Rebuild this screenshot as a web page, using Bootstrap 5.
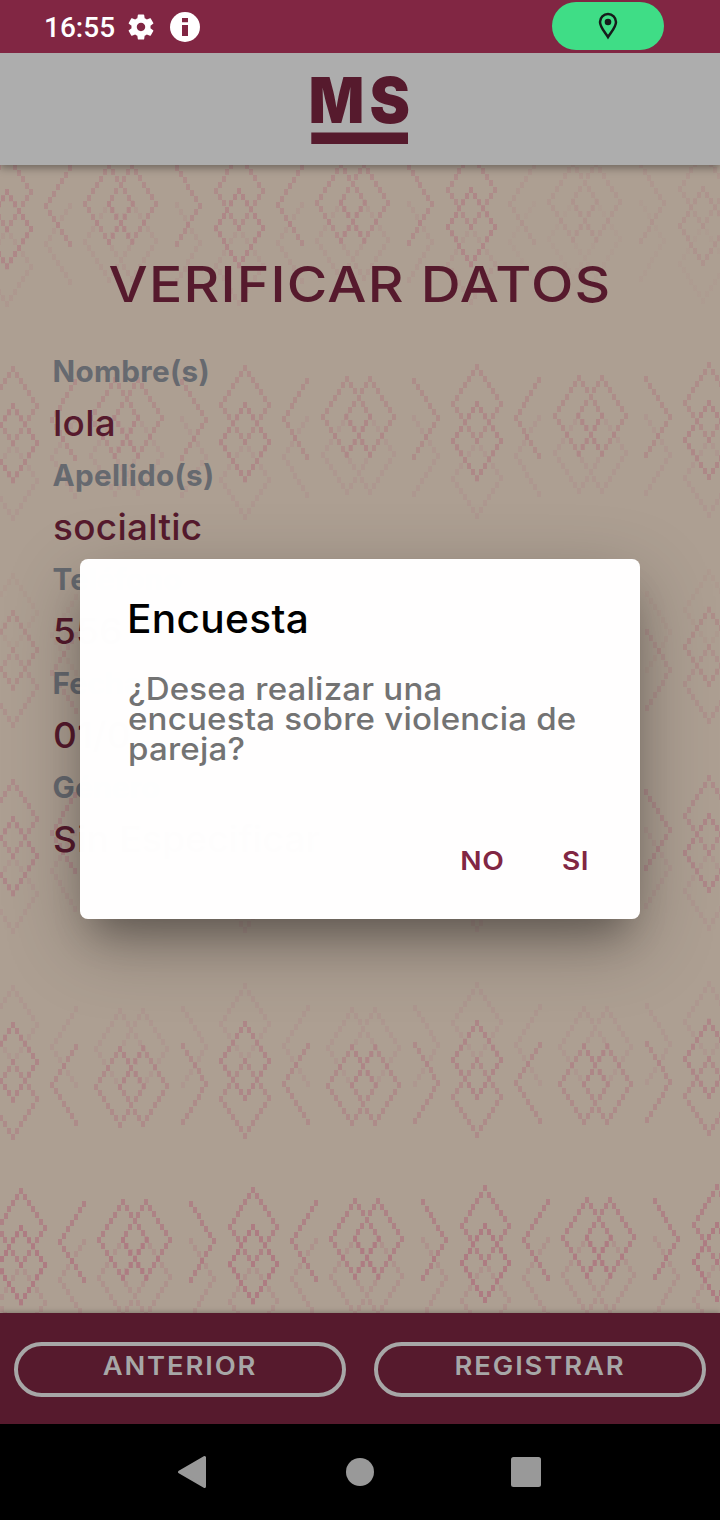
<!DOCTYPE html>
<html lang="es">
<head>
<meta charset="utf-8">
<meta name="viewport" content="width=device-width, initial-scale=1">
<title>Verificar datos</title>
<link rel="stylesheet" href="https://cdn.jsdelivr.net/npm/bootstrap@5.3.0/dist/css/bootstrap.min.css">
<style>
  body { font-family: Inter, "Liberation Sans", sans-serif; background: #000; }
  .screen { width: 720px; height: 1520px; }
  .status-bar { height: 53px; background: #812643; padding-left: 44px; padding-right: 56px; }
  .clock { font: 500 28px/53px Roboto, sans-serif; color: #fff; width: 84px; padding-top: 2px; }
  .gps-pill { width: 112px; height: 48px; background: #3fdd86; border-radius: 24px; margin-bottom: 1px; }
  .app-bar { height: 112px; background: #adadad; box-shadow: 0 3px 8px rgba(0,0,0,.36); clip-path: inset(0 0 -20px 0); z-index: 1; }
  .content { background: #ad9f92; padding: 89px 50px 0; }
  .motifs { top: 0; left: 0; z-index: 0; }
  .heading { font-size: 50px; line-height: 60px; font-weight: 540; letter-spacing: 1.1px; margin: 0 0 31px 0; color: #561a2d; white-space: nowrap; transform: scaleX(1.105); }
  dl { padding-left: 2.500px; }
  dt, dd { line-height: 52px; white-space: nowrap; transform-origin: 0 0; }
  dt { font-size: 29.7px; font-weight: 720; color: #66696f; letter-spacing: .3px; }
  dd { font-size: 36px; font-weight: 520; color: #561a2d; letter-spacing: .3px; transform: scaleX(1.025); }
  .dialog-layer { top: 54px; left: 0; width: 720px; height: 1370px; z-index: 3; }
  .dialog { width: 560px; height: 360px; border-radius: 8px; background: rgba(255,255,255,.991); padding: 36px 52px 0 46px; box-shadow: 0 24px 76px rgba(0,0,0,.28), 0 26px 36px -14px rgba(0,0,0,.28); }
  .dialog h2, .dialog p { transform-origin: 0 0; white-space: nowrap; width: max-content; }
  .dialog h2 { font-size: 39px; line-height: 48px; font-weight: 540; letter-spacing: .3px; color: #000; margin: 0 0 31px 1px; transform: scaleX(1.042); }
  .dialog p { font-size: 31px; line-height: 30px; font-weight: 540; letter-spacing: .2px; color: #737373; margin: 0 0 81px 2px; transform: scaleX(1.066); }
  .action { font-size: 26px; line-height: 32px; font-weight: 560; letter-spacing: .5px; color: #812643; background: none; border: 0; padding: 0; transform: scaleX(1.08); }
  .action-gap { gap: 60px; }
  .bottom-bar { height: 111px; background: #561a2d; padding: 29px 14px 0; gap: 28px; box-shadow: 0 -1px 5px rgba(0,0,0,.25); z-index: 1; }
  .outline-btn { height: 55px; border: 4px solid #a7a7a7; border-radius: 28px; color: #a7a7a7; padding: 0 0 7px; }
  .outline-btn span { display: block; font-size: 25px; font-weight: 560; line-height: 40px; letter-spacing: 1.7px; transform: scaleX(1.095); }
  .nav-keys { height: 96px; background: #000; }
</style>
</head>
<body>
<div class="screen d-flex flex-column position-relative overflow-hidden">
  <header class="status-bar d-flex align-items-center flex-shrink-0">
    <span class="clock">16:55</span>
    <svg width="26" height="26" viewBox="2.2 2 19.6 20" class="flex-shrink-0" preserveAspectRatio="none"><path fill="#fff" d="M19.14 12.94c.04-.3.06-.61.06-.94 0-.32-.02-.64-.07-.94l2.03-1.58c.18-.14.23-.41.12-.61l-1.92-3.32c-.12-.22-.37-.29-.59-.22l-2.39.96c-.5-.38-1.03-.7-1.62-.94l-.36-2.54c-.04-.24-.24-.41-.48-.41h-3.84c-.24 0-.43.17-.47.41l-.36 2.54c-.59.24-1.13.57-1.62.94l-2.39-.96c-.22-.08-.47 0-.59.22L2.74 8.87c-.12.21-.08.47.12.61l2.03 1.58c-.05.3-.09.63-.09.94s.02.64.07.94l-2.03 1.58c-.18.14-.23.41-.12.61l1.92 3.32c.12.22.37.29.59.22l2.39-.96c.5.38 1.03.7 1.62.94l.36 2.54c.05.24.24.41.48.41h3.84c.24 0 .44-.17.47-.41l.36-2.54c.59-.24 1.13-.56 1.62-.94l2.39.96c.22.08.47 0 .59-.22l1.92-3.32c.12-.22.07-.47-.12-.61l-2.01-1.58zM12 15.2c-1.77 0-3.2-1.43-3.2-3.2s1.43-3.2 3.2-3.2 3.2 1.43 3.2 3.2-1.43 3.2-3.2 3.2z"/></svg>
    <svg width="30" height="30" viewBox="0 0 30 30" class="ms-3 flex-shrink-0"><circle cx="15" cy="15" r="15" fill="#fff"/><path fill="#812643" d="M12 6h6v4.300h-6zM12 13h6v11h-6z"/></svg>
    <div class="gps-pill ms-auto d-flex align-items-center justify-content-center">
      <svg width="20" height="28" viewBox="0 0 20 28"><path d="M10 2C5.600 2 2 5.500 2 9.900c0 5.200 5.200 10.600 8 15.200 2.800-4.600 8-10 8-15.200C18 5.500 14.400 2 10 2z" fill="none" stroke="#161c1b" stroke-width="2.500"/><circle cx="10" cy="10" r="3.300" fill="#161c1b"/></svg>
    </div>
  </header>

  <div class="app-bar position-relative flex-shrink-0 d-flex justify-content-center">
    <svg width="110" height="112" viewBox="305 53 110 112" font-family="Inter, sans-serif" font-weight="900" font-size="63.500" fill="#561a2d">
      <text x="308.800" y="123" textLength="55.500" lengthAdjust="spacingAndGlyphs">M</text>
      <text x="369.500" y="123" textLength="40.500" lengthAdjust="spacingAndGlyphs">S</text>
      <rect x="311.300" y="132.500" width="96.700" height="11.500"/>
    </svg>
  </div>

  <main class="content flex-grow-1 position-relative overflow-hidden">
    <svg class="motifs position-absolute" width="720" height="1148" viewBox="0 165 720 1148" id="motifs"></svg>
    <h1 class="heading text-center position-relative">VERIFICAR DATOS</h1>
    <dl class="m-0 position-relative">
      <dt>Nombre(s)</dt><dd class="m-0">lola</dd>
      <dt>Apellido(s)</dt><dd class="m-0">socialtic</dd>
      <dt>Teléfono</dt><dd class="m-0">556</dd>
      <dt>Fecha</dt><dd class="m-0">01/0</dd>
      <dt>Género</dt><dd class="m-0">Sin Especificar</dd>
    </dl>
  </main>

  <footer class="bottom-bar d-flex position-relative flex-shrink-0">
    <button class="outline-btn btn flex-fill w-50"><span>ANTERIOR</span></button>
    <button class="outline-btn btn flex-fill w-50"><span>REGISTRAR</span></button>
  </footer>

  <nav class="nav-keys flex-shrink-0">
    <svg width="720" height="96" viewBox="0 1424 720 96" fill="#999"><path d="M179.500 1472 204.500 1457.500V1486.500z" stroke="#999" stroke-width="3" stroke-linejoin="round"/><circle cx="360" cy="1472" r="14"/><rect x="511" y="1457" width="30" height="30" rx="2.500"/></svg>
  </nav>

  <div class="dialog-layer position-absolute d-flex align-items-center justify-content-center">
    <section class="dialog" role="dialog" aria-label="Encuesta">
      <h2>Encuesta</h2>
      <p>¿Desea realizar una<br>encuesta sobre violencia de<br>pareja?</p>
      <div class="action-gap d-flex justify-content-end">
        <button class="action">NO</button>
        <button class="action">SI</button>
      </div>
    </section>
  </div>
</div>
<script src="https://cdn.jsdelivr.net/npm/bootstrap@5.3.0/dist/js/bootstrap.bundle.min.js"></script>
<script>
  // Woven diamond border: every line is a staircase of small cells.
  const W = 4, STEP = 3.95;
  function line(x, y, sx, dy, n) {
    const pts = [];
    for (let i = 0; i <= n; i++) pts.push([x + sx * i * STEP, y + i * dy]);
    return pts;
  }
  function diamond(x, y, dy) {
    return [...line(x, y, 1, dy, 6), ...line(x, y, -1, dy, 6),
            ...line(x + 6 * STEP, y + 6 * dy, -1, dy, 6), ...line(x - 6 * STEP, y + 6 * dy, 1, dy, 6)];
  }
  const unit = [
    ...diamond(0, 0, 6.2), ...diamond(0, 37.2, 6.2),
    ...line(62.3, 13.7, -1, 6.33, 6), ...line(38.6, 51.7, 1, 6.33, 6),
    ...diamond(101.7, 11.7, 6.33), ...diamond(124.9, 11.7, 6.33),
    ...line(169.3, 13.7, 1, 6.33, 6), ...line(193, 51.7, -1, 6.33, 6)
  ];
  // x, y of the first diamond's tip; flipped rows are turned half round
  const rows = [
    { x: 7.3, y: 155, a: .33, f: .13, fade: true },
    { x: 13, y: 369, a: .31, f: .13 },
    { x: 13, y: 725, a: .22, f: .08, flip: true },
    { x: 13, y: 782, a: .33, f: .12 },
    { x: 13, y: 1137, a: .34, f: .12, flip: true },
    { x: 21.3, y: 1191, a: .50, f: .22 }
  ];
  function cells(row, shift) {
    const seen = [];
    let d = '';
    const dir = row.flip ? -1 : 1;
    for (let k = -1; k < 5; k++) for (const [ux, uy] of unit) {
      const px = row.x + k * 232 + dir * ux;
      const py = row.y + dir * (uy + shift) - (px / 232) * 1.1;
      if (seen.some(([a, b]) => Math.abs(a - px) < 2 && Math.abs(b - py) < 3)) continue;
      seen.push([px, py]);
      d += `M${Math.round(px - W / 2)} ${Math.round(py - 3.2)}h${W}v6h-${W}z`;
    }
    return d;
  }
  let svg = '<defs><linearGradient id="fade" gradientUnits="userSpaceOnUse" x1="498" x2="502" y1="0" y2="0"><stop stop-color="#ae6678"/><stop offset="1" stop-color="#ae6678" stop-opacity=".45"/></linearGradient></defs>';
  for (const r of rows) {
    const fill = r.fade ? 'url(#fade)' : '#ae6678';
    svg += `<path fill="${fill}" opacity="${r.f}" d="${cells(r, 37.6)}"/><path fill="${fill}" opacity="${r.a}" d="${cells(r, 0)}"/>`;
  }
  document.getElementById('motifs').innerHTML = svg;
</script>
</body>
</html>
